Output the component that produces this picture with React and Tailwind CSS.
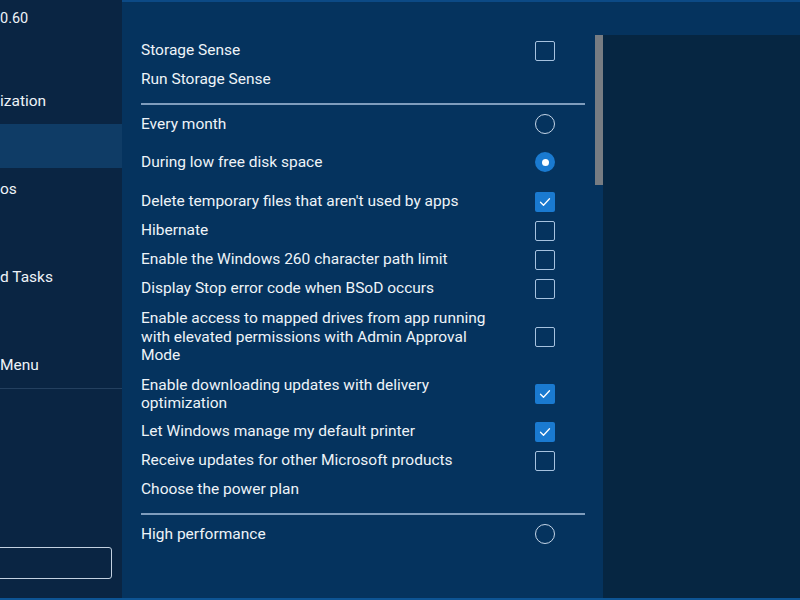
import React from 'react';

const Check = () => (
  <div className="flex h-[20px] w-[20px] items-center justify-center rounded-[2px] bg-[#1a7ad0]">
    <svg width="14" height="14" viewBox="0 0 14 14" fill="none">
      <path d="M2.5 7.2l3 3 6-6.4" stroke="#ffffff" strokeWidth="1.3" strokeLinecap="round" strokeLinejoin="round" />
    </svg>
  </div>
);

const Box = () => <div className="h-[20px] w-[20px] rounded-[2px] border-[1.5px] border-[#a6c2df]" />;

const Radio = ({ on }) =>
  on ? (
    <div className="flex h-[20px] w-[20px] items-center justify-center rounded-full bg-[#1a7ad0]">
      <div className="h-[7px] w-[7px] rounded-full bg-white" />
    </div>
  ) : (
    <div className="h-[20px] w-[20px] rounded-full border-[1.5px] border-[#c6d6e8]" />
  );

const Row = ({ label, control, h = 'h-[29px]', extra = '' }) => (
  <div className={`flex items-center ${h} ${extra}`}>
    <div className="w-[362px] leading-[18.5px]">{label}</div>
    <div className="ml-auto mr-[30px]">{control}</div>
  </div>
);

const Divider = ({ extra = '' }) => <div className={`h-[2px] bg-[#7f9dbd] ${extra}`} />;

const sideItems = [
  { text: 'ization' },
  { text: '', active: true },
  { text: 'os' },
  { text: '' },
  { text: 'd Tasks' },
  { text: '' },
  { text: 'Menu' },
];

export default function App() {
  return (
    <div
      className="flex h-[600px] w-[800px] overflow-hidden border-b-2 border-[#0d5494] text-[15.5px] text-[#eef3f8]"
      style={{ fontFamily: 'Roboto, "Noto Sans", sans-serif' }}
    >
      {/* sidebar */}
      <div className="flex w-[122px] flex-col overflow-hidden bg-[#0a2543]">
        <div className="h-[80px] pt-[9px] text-[14.5px] leading-[20px]">0.60</div>
        {sideItems.map((it, i) => (
          <div key={i} className={`flex h-[44px] items-center ${it.active ? 'bg-[#0f3c66]' : ''}`}>
            {it.text}
          </div>
        ))}
        <div className="h-px bg-[#24405f]" />
        <div className="mt-auto mb-[19px] -ml-[8px] h-[32px] w-[120px] rounded-[3px] border border-[#c3d1e0]" />
      </div>

      {/* main */}
      <div className="flex flex-1 border-t-2 border-[#0c4a86] bg-[#05335e]">
        <div className="w-[473px] pl-[19px] pr-[10px] pt-[34px]">
          <Row label="Storage Sense" control={<Box />} />
          <Row label="Run Storage Sense" control={null} />
          <Divider extra="mt-[9px]" />
          <Row label="Every month" control={<Radio />} h="h-[38px]" />
          <Row label="During low free disk space" control={<Radio on />} h="h-[38px]" />
          <Row label="Delete temporary files that aren't used by apps" control={<Check />} extra="mt-[6px]" />
          <Row label="Hibernate" control={<Box />} />
          <Row label="Enable the Windows 260 character path limit" control={<Box />} />
          <Row label="Display Stop error code when BSoD occurs" control={<Box />} />
          <Row
            label="Enable access to mapped drives from app running with elevated permissions with Admin Approval Mode"
            control={<Box />}
            h="h-[68px]"
          />
          <Row label="Enable downloading updates with delivery optimization" control={<Check />} h="h-[46px]" />
          <Row label="Let Windows manage my default printer" control={<Check />} />
          <Row label="Receive updates for other Microsoft products" control={<Box />} />
          <Row label="Choose the power plan" control={null} />
          <Divider extra="mt-[9px]" />
          <Row label="High performance" control={<Radio />} h="h-[38px]" />
        </div>
        <div className="mt-[33px] h-[150px] w-[8px] bg-[#777c82]" />
        <div className="mt-[33px] flex-1 bg-[#062642]" />
      </div>
    </div>
  );
}
